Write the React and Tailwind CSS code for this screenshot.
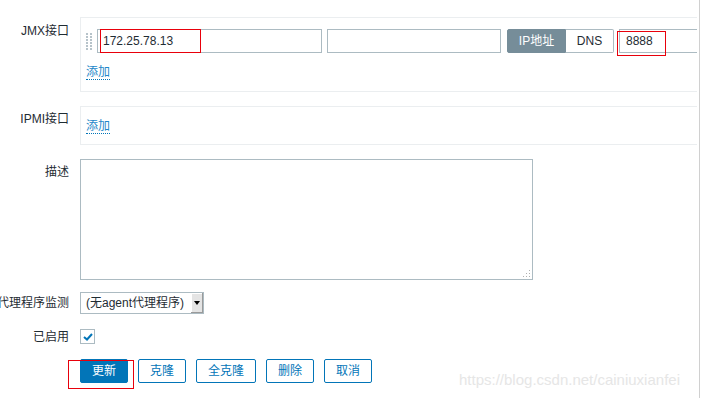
import React from "react";

const font = "font-['Liberation_Sans','Noto_Sans_CJK_SC',sans-serif]";

function DragHandle() {
  const dots = [];
  for (let r = 0; r < 6; r++) {
    for (let c = 0; c < 2; c++) {
      dots.push(<rect key={`${r}-${c}`} x={c * 4} y={r * 3} width="2" height="2" fill="#b7c3ca" />);
    }
  }
  return (
    <svg width="6" height="17" viewBox="0 0 6 17" className="shrink-0">
      {dots}
    </svg>
  );
}

function AddLink() {
  return (
    <div className="flex h-[15px]">
      <span className="block h-[15px] border-b border-dotted border-[#0275b8] leading-[14px] text-[#1e87c9]">添加</span>
    </div>
  );
}

function Button({ children, primary }) {
  return (
    <div
      className={`flex h-[24px] items-center justify-center rounded-[2px] border border-[#0275b8] px-[11px] leading-none ${
        primary ? "bg-[#0275b8] text-white" : "bg-white text-[#0275b8]"
      }`}
    >
      {children}
    </div>
  );
}

function Label({ children, className = "" }) {
  return (
    <div className={`flex h-[14px] w-[80px] shrink-0 justify-end whitespace-nowrap pr-[11px] leading-[14px] ${className}`}>
      <span>{children}</span>
    </div>
  );
}

export default function App() {
  return (
    <div className={`relative flex h-[398px] w-[702px] overflow-hidden bg-white text-[12px] leading-[14px] text-[#1f2c33] ${font}`}>
      <div className="flex w-[699px] flex-col pt-[17px]">
        {/* JMX */}
        <div className="flex items-start">
          <Label className="mt-[7px]">JMX接口</Label>
          <div className="w-[617px] border-y border-l border-[#ebeef0] pb-[11px] pl-[5px] pt-[11px]">
            <div className="flex h-[24px] items-center">
              <DragHandle />
              <div className="ml-[5px] flex h-[24px] w-[225px] items-center border border-[#acbbc2] px-[5px]">
                172.25.78.13
              </div>
              <div className="ml-[5px] h-[24px] w-[174px] border border-[#acbbc2]" />
              <div className="ml-[6px] flex h-[24px]">
                <div className="flex w-[59px] items-center justify-center rounded-l-[2px] border border-[#768d99] bg-[#768d99] text-white">
                  IP地址
                </div>
                <div className="flex w-[48px] items-center justify-center rounded-r-[2px] border border-l-0 border-[#acbbc2] bg-white">
                  DNS
                </div>
              </div>
              <div className="ml-[5px] flex h-[24px] flex-1 items-center border-y border-l border-[#acbbc2] px-[6px]">
                8888
              </div>
            </div>
            <div className="mt-[12px]">
              <AddLink />
            </div>
          </div>
        </div>

        {/* IPMI */}
        <div className="mt-[14px] flex items-start">
          <Label className="mt-[6px]">IPMI接口</Label>
          <div className="w-[617px] border-y border-l border-[#ebeef0] pb-[10px] pl-[5px] pt-[12px]">
            <AddLink />
          </div>
        </div>

        {/* 描述 */}
        <div className="mt-[14px] flex items-start">
          <Label className="mt-[6px]">描述</Label>
          <div className="relative h-[121px] w-[453px] border border-[#acbbc2]">
            <svg width="9" height="9" viewBox="0 0 9 9" className="absolute bottom-[1px] right-[1px]">
              <rect x="7" y="1" width="1" height="1" fill="#b0b0b0" />
              <rect x="4" y="4" width="1" height="1" fill="#b0b0b0" />
              <rect x="7" y="4" width="1" height="1" fill="#b0b0b0" />
              <rect x="1" y="7" width="1" height="1" fill="#b0b0b0" />
              <rect x="4" y="7" width="1" height="1" fill="#b0b0b0" />
              <rect x="7" y="7" width="1" height="1" fill="#b0b0b0" />
            </svg>
          </div>
        </div>

        {/* 代理程序监测 */}
        <div className="mt-[12px] flex items-center">
          <Label>代理程序监测</Label>
          <div className="flex h-[22px] w-[124px] items-stretch border border-[#acbbc2]">
            <div className="flex flex-1 items-center whitespace-nowrap pl-[5px]">(无agent代理程序)</div>
            <div className="flex w-[12px] items-center justify-center border-b border-r border-[#9a9a9a] bg-[#e4e4e4] shadow-[inset_1px_1px_0_#fff]">
              <svg width="6" height="4" viewBox="0 0 6 4">
                <path d="M0 0 H6 L3 4 Z" fill="#000" />
              </svg>
            </div>
          </div>
        </div>

        {/* 已启用 */}
        <div className="mt-[15px] flex items-center">
          <Label>已启用</Label>
          <div className="flex h-[15px] w-[15px] items-center justify-center border border-[#acbbc2]">
            <svg width="10" height="8" viewBox="0 0 10 8">
              <path d="M1 4 L4 6.5 L9 1" fill="none" stroke="#0275b8" strokeWidth="2" />
            </svg>
          </div>
        </div>

        {/* buttons */}
        <div className="mt-[15px] flex gap-[10px] pl-[80px]">
          <Button primary>更新</Button>
          <Button>克隆</Button>
          <Button>全克隆</Button>
          <Button>删除</Button>
          <Button>取消</Button>
        </div>
      </div>
      <div className="h-full w-[1px] bg-[#d0d0d0]" />

      {/* annotations */}
      <div className="pointer-events-none absolute left-[100px] top-[29px] h-[24px] w-[101px] border border-[#e8000b]" />
      <div className="pointer-events-none absolute left-[617px] top-[31px] h-[25px] w-[49px] border border-[#e8000b]" />
      <div className="pointer-events-none absolute left-[68px] top-[360px] h-[29px] w-[66px] border border-[#e8000b]" />
      <div className="pointer-events-none absolute left-[459px] top-[371px] whitespace-nowrap text-[15px] leading-[18px] text-[#e6e6e6]">
        https://blog.csdn.net/cainiuxianfei
      </div>
    </div>
  );
}
